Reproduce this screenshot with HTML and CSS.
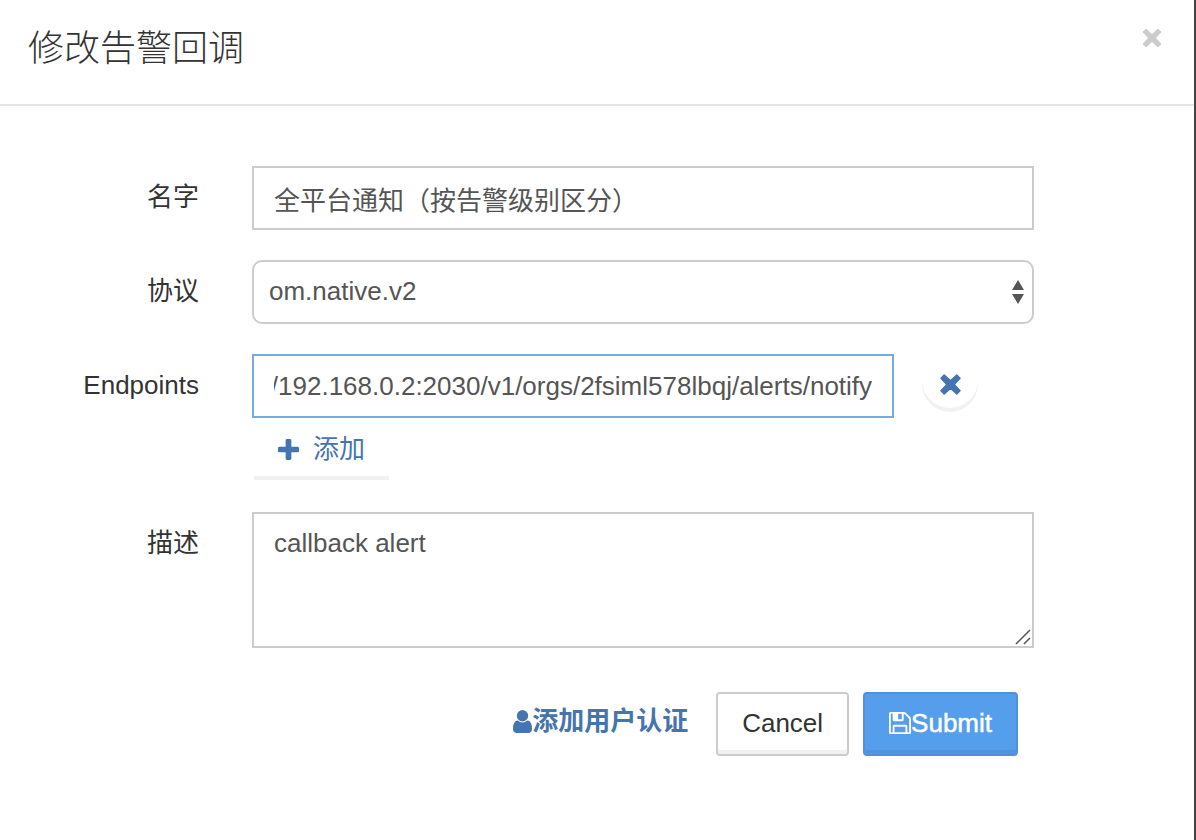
FILE: index.html
```html
<!DOCTYPE html>
<html lang="zh-CN">
<head>
  <meta charset="UTF-8">
  <meta name="viewport" content="width=device-width, initial-scale=1.0">
  <title>修改告警回调</title>
  <link rel="stylesheet" href="styles.css">
</head>
<body>
  <div class="modal">
    <header class="modal-header">
      <h1 class="modal-title">修改告警回调</h1>
      <button type="button" class="close" aria-label="Close">
        <svg viewBox="0 0 20 20"><path d="M4 1L10 6.500 16 1 19 4 13.500 10 19 16 16 19 10 13.500 4 19 1 16 6.500 10 1 4z"/></svg>
      </button>
    </header>

    <form class="modal-body">
      <div class="form-row">
        <label for="name">名字</label>
        <input type="text" id="name" class="form-control" value="全平台通知（按告警级别区分）">
      </div>

      <div class="form-row">
        <label for="protocol">协议</label>
        <div class="select-wrap">
          <select id="protocol" class="form-control">
            <option selected>om.native.v2</option>
          </select>
          <svg class="arrows" viewBox="0 0 12 24"><path d="M6 0l6 10H0zM0 14h12L6 24z"/></svg>
        </div>
      </div>

      <div class="form-row">
        <label for="endpoint">Endpoints</label>
        <div>
          <div class="endpoint">
            <input type="text" id="endpoint" class="form-control active" value="http://192.168.0.2:2030/v1/orgs/2fsiml578lbqj/alerts/notify">
            <button type="button" class="btn btn-round" aria-label="Remove">
              <svg class="icon-remove" viewBox="0 0 20 20"><path d="M4 1L10 6.500 16 1 19 4 13.500 10 19 16 16 19 10 13.500 4 19 1 16 6.500 10 1 4z"/></svg>
            </button>
          </div>
          <button type="button" class="btn btn-add">
            <svg class="icon-plus" viewBox="0 0 22 22"><path d="M9.500 0h3q1.500 0 1.500 1.500V8h6.500q1.500 0 1.500 1.500v3q0 1.500-1.500 1.500H14v6.500q0 1.500-1.500 1.500h-3Q8 22 8 20.500V14H1.500Q0 14 0 12.500v-3Q0 8 1.500 8H8V1.500Q8 0 9.500 0z"/></svg>
            添加
          </button>
        </div>
      </div>

      <div class="form-row">
        <label for="description">描述</label>
        <div class="textarea-wrap">
          <textarea id="description" class="form-control">callback alert</textarea>
          <svg class="grip" viewBox="0 0 16 16"><path d="M1 15L15 1M9 15l6-6"/></svg>
        </div>
      </div>

      <div class="form-actions">
        <a href="#" class="auth-link">
          <svg class="icon-user" viewBox="0 0 1280 1536"><path d="M1280 1271q0 109-62.500 187t-150.500 78H213q-88 0-150.500-78T0 1271q0-85 8.500-160.500t31.500-152 58.500-131 94-89T327 704q131 128 313 128t313-128q76 0 134.500 34.500t94 89 58.500 131 31.500 152 8.500 160.500zM1024 384q0 159-112.500 271.500T640 768 368.500 655.500 256 384t112.500-271.500T640 0t271.500 112.500T1024 384z"/></svg>添加用户认证
        </a>
        <button type="button" class="btn btn-default">Cancel</button>
        <button type="submit" class="btn btn-primary">
          <svg class="icon-save" viewBox="0 0 1536 1536"><path d="M384 1408h768v-384H384v384zm896 0h128V512q0-14-10-38.500t-20-34.500l-281-281q-10-10-34-20t-39-10v416q0 40-28 68t-68 28H352q-40 0-68-28t-28-68V128H128v1280h128V992q0-40 28-68t68-28h832q40 0 68 28t28 68v416zM896 480V160q0-13-9.500-22.500T864 128H672q-13 0-22.500 9.500T640 160v320q0 13 9.500 22.500T672 512h192q13 0 22.500-9.500T896 480zm640 32v928q0 40-28 68t-68 28H96q-40 0-68-28t-28-68V96q0-40 28-68T96 0h928q40 0 88 20t76 48l280 280q28 28 48 76t20 88z"/></svg>Submit
        </button>
      </div>
    </form>
  </div>

  <script>
    // Keep the end of a long endpoint url in view
    const endpoint = document.getElementById('endpoint');
    endpoint.scrollLeft = endpoint.scrollWidth;
  </script>
</body>
</html>
```
FILE: styles.css
```css
* {
  box-sizing: border-box;
}

body {
  margin: 0;
  padding-right: 2px;
  background: #444;
  color: #333;
  font-family: "Liberation Sans", "Noto Sans CJK SC", sans-serif;
  font-size: 26px;
  line-height: 36px;
}

.modal {
  min-height: 100vh;
  background: #fff;
}

.modal-header {
  display: flex;
  justify-content: space-between;
  align-items: flex-start;
  padding: 28px 32px 34px 28px;
  border-bottom: 2px solid #e5e5e5;
}

.modal-title {
  margin: 0;
  font-size: 36px;
  line-height: 42px;
  font-weight: 300;
}

.close {
  display: flex;
  padding: 0;
  border: none;
  background: none;
  cursor: pointer;
}

.close svg {
  width: 20px;
  height: 20px;
  fill: #ccc;
  stroke: #ccc;
  stroke-width: 1;
  stroke-linejoin: round;
}

.modal-body {
  display: flex;
  flex-direction: column;
  gap: 30px;
  padding: 60px 160px 60px 0;
}

.form-row {
  display: grid;
  grid-template-columns: 199px 1fr;
  column-gap: 53px;
}

label {
  padding-top: 13px;
  text-align: right;
}

.form-control {
  display: block;
  width: 100%;
  height: 64px;
  padding: 0 20px;
  border: 2px solid #ccc;
  border-radius: 0;
  background: #fff;
  color: #555;
  font: inherit;
  outline: none;
}

.form-control.active {
  border-color: #78aadb;
}

.select-wrap,
.textarea-wrap {
  position: relative;
}

select.form-control {
  padding: 0 40px 2px 15px;
  border-radius: 10px;
  appearance: none;
}

.arrows {
  position: absolute;
  top: 20px;
  right: 10px;
  width: 12px;
  height: 24px;
  fill: #555;
  pointer-events: none;
}

textarea.form-control {
  height: 136px;
  padding: 11px 20px;
  resize: none;
}

.grip {
  position: absolute;
  right: 3px;
  bottom: 3px;
  width: 16px;
  height: 16px;
  fill: none;
  stroke: #555;
  stroke-width: 1.5;
  pointer-events: none;
}

.endpoint {
  display: flex;
  gap: 26px;
  padding-right: 54px;
}

.endpoint .form-control {
  flex: 1;
  min-width: 0;
}

.btn {
  display: inline-flex;
  align-items: center;
  justify-content: center;
  height: 64px;
  padding: 0 24px 2px;
  border: 2px solid transparent;
  border-radius: 4px;
  background: #fff;
  background-clip: padding-box;
  box-shadow: inset 0 -4px 0 #f1f1f1;
  color: #333;
  font: inherit;
  cursor: pointer;
}

.btn-round {
  width: 60px;
  height: 60px;
  padding: 0;
  border-radius: 50%;
}

.btn-add {
  gap: 14px;
  border-radius: 0;
  color: #4575ae;
}

.icon-remove {
  width: 21px;
  height: 21px;
  fill: #4575ae;
  stroke: #4575ae;
  stroke-width: 1.5;
  stroke-linejoin: round;
}

.icon-plus {
  width: 21px;
  height: 21px;
  fill: #4575ae;
}

.form-actions {
  display: flex;
  justify-content: flex-end;
  gap: 14px;
  padding: 14px 16px 0 0;
}

.auth-link {
  display: flex;
  align-items: center;
  height: 58px;
  margin-right: 14px;
  color: #4575ae;
  font-weight: bold;
  text-decoration: none;
}

.icon-user {
  width: 19px;
  height: 23px;
  fill: #4575ae;
}

.btn-default {
  border-color: #ccc;
}

.btn-primary {
  border-color: #4f92dc;
  background: #559eec;
  box-shadow: inset 0 -4px 0 #5094df;
  color: #fff;
  -webkit-text-stroke: 0.5px #fff;
}

.icon-save {
  width: 22px;
  height: 22px;
  fill: #fff;
}
```
